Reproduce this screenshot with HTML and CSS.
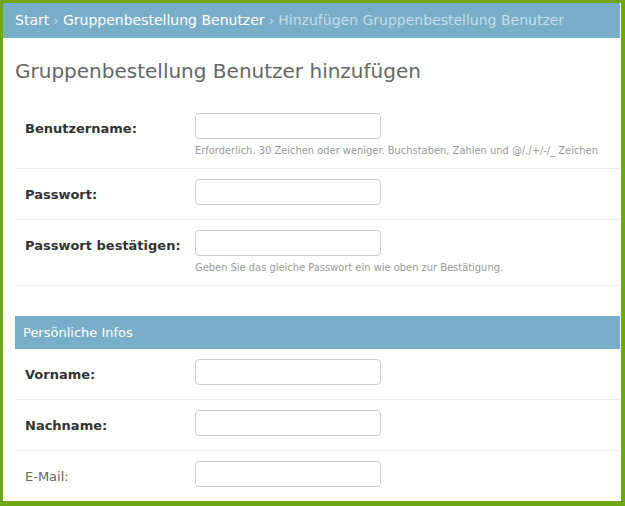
FILE: index.html
```html
<!DOCTYPE html>
<html lang="de">
<head>
<meta charset="utf-8">
<title>Gruppenbestellung Benutzer hinzufügen</title>
<link rel="stylesheet" href="styles.css">
</head>
<body>
<div class="frame">
  <div class="breadcrumbs">
    <a href="#">Start</a> <span class="sep">›</span> <a href="#">Gruppenbestellung Benutzer</a> <span class="sep">›</span> <span class="current">Hinzufügen Gruppenbestellung Benutzer</span>
  </div>
  <div class="content">
    <h1>Gruppenbestellung Benutzer hinzufügen</h1>
    <fieldset class="module">
      <div class="form-row">
        <label class="required" for="id_username">Benutzername:</label>
        <div class="field">
          <input type="text" id="id_username">
          <p class="help">Erforderlich. 30 Zeichen oder weniger. Buchstaben, Zahlen und @/./+/-/_ Zeichen</p>
        </div>
      </div>
      <div class="form-row">
        <label class="required" for="id_password1">Passwort:</label>
        <div class="field">
          <input type="password" id="id_password1">
        </div>
      </div>
      <div class="form-row">
        <label class="required" for="id_password2">Passwort bestätigen:</label>
        <div class="field">
          <input type="password" id="id_password2">
          <p class="help">Geben Sie das gleiche Passwort ein wie oben zur Bestätigung.</p>
        </div>
      </div>
    </fieldset>
    <fieldset class="module second">
      <h2>Persönliche Infos</h2>
      <div class="form-row">
        <label class="required" for="id_first_name">Vorname:</label>
        <div class="field"><input type="text" id="id_first_name"></div>
      </div>
      <div class="form-row">
        <label class="required" for="id_last_name">Nachname:</label>
        <div class="field"><input type="text" id="id_last_name"></div>
      </div>
      <div class="form-row">
        <label for="id_email">E-Mail:</label>
        <div class="field"><input type="email" id="id_email"></div>
      </div>
    </fieldset>
  </div>
</div>
</body>
</html>
```
FILE: styles.css
```css
html, body {
  margin: 0;
  padding: 0;
  background: #ffffff;
}
body {
  font-family: "DejaVu Sans", Verdana, sans-serif;
  color: #333333;
}
.frame {
  box-sizing: border-box;
  width: 625px;
  height: 506px;
  overflow: hidden;
  border-style: solid;
  border-color: #6fa815;
  border-width: 3px 4px 5px 3px;
  padding-right: 1px;
  background: #ffffff;
}
.breadcrumbs {
  height: 35px;
  line-height: 35px;
  padding: 0 12px;
  background: #79aec8;
  color: #c4dce8;
  font-size: 14px;
  white-space: nowrap;
}
.breadcrumbs a {
  color: #ffffff;
  text-decoration: none;
}
.breadcrumbs .sep {
  font-size: 12px;
}
.content {
  padding-left: 12px;
}
h1 {
  margin: 21px 0 0;
  font-size: 20px;
  line-height: 24px;
  font-weight: normal;
  color: #666666;
}
fieldset.module {
  margin: 20px 0 0;
  padding: 0;
  border: 0;
  min-width: 0;
}
fieldset.module.second {
  margin-top: 30px;
}
h2 {
  margin: 0;
  height: 33px;
  line-height: 33px;
  padding-left: 8px;
  background: #79aec8;
  color: #ffffff;
  font-size: 13px;
  font-weight: normal;
}
.form-row {
  display: flex;
  padding: 10px;
  border-bottom: 1px solid #eeeeee;
}
.form-row label {
  flex: none;
  width: 160px;
  padding: 6px 10px 0 0;
  line-height: 20px;
  font-size: 13px;
  color: #666666;
}
.form-row label.required {
  font-weight: bold;
  color: #333333;
}
.field input {
  display: block;
  box-sizing: border-box;
  width: 186px;
  height: 26px;
  margin: 0 0 4px;
  padding: 2px 5px;
  border: 1px solid #cccccc;
  border-radius: 4px;
  background: #ffffff;
  font-family: inherit;
  font-size: 13px;
}
.help {
  margin: 0;
  padding-top: 1px;
  font-family: "DejaVu Sans Condensed", "DejaVu Sans", sans-serif;
  font-stretch: condensed;
  font-size: 11px;
  line-height: 14px;
  color: #999999;
  white-space: nowrap;
}
```
